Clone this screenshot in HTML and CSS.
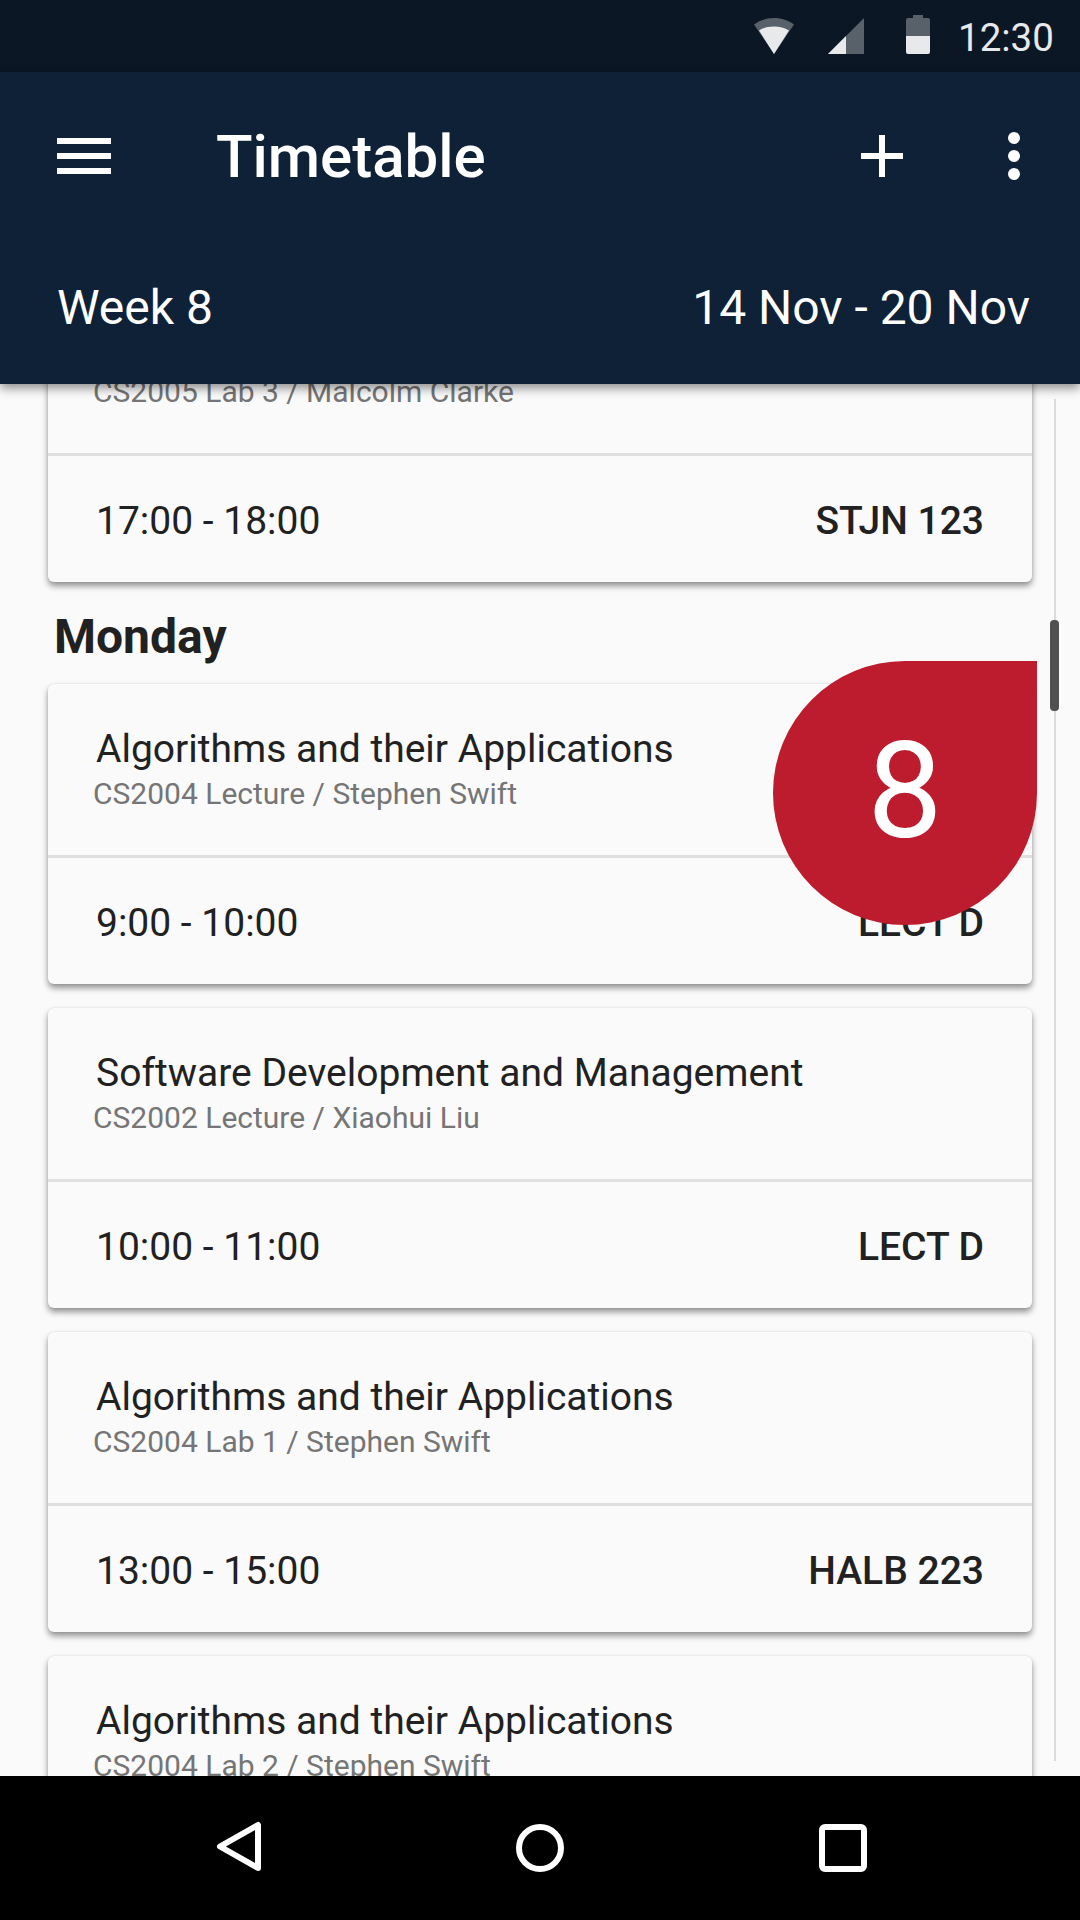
FILE: index.html
```html
<!DOCTYPE html>
<html>
<head>
	<meta charset="utf-8">
	<meta name="viewport" content="width=device-width, initial-scale=1">
	<title>Timetable</title>
	<link rel="stylesheet" href="styles.css">
</head>
<body>

<div class="screen">
	<div class="status-bar">
		<svg class="status-icon" width="40" height="36" viewBox="0 0 40 36">
			<path d="M0 6.5C5.5 2.4 12.4 0 20 0s14.500 2.400 20 6.500L20 36z" fill="#586069"/>
			<path d="M5 12.500C9.200 9.800 14.400 8.600 20 8.600s10.800 1.200 15 3.900L20 36z" fill="#e8e9eb"/>
		</svg>
		<svg class="status-icon signal" width="36" height="36" viewBox="0 0 36 36">
			<path d="M36 0v36H0z" fill="#586069"/>
			<path d="M18 18v18H0z" fill="#e8e9eb"/>
		</svg>
		<svg class="status-icon battery" width="24" height="39" viewBox="0 0 24 39">
			<path d="M7 0h10v3h5a2 2 0 0 1 2 2v16H0V5a2 2 0 0 1 2-2h5z" fill="#586069"/>
			<path d="M0 21h24v16a2 2 0 0 1-2 2H2a2 2 0 0 1-2-2z" fill="#e8e9eb"/>
		</svg>
		<span class="clock">12:30</span>
	</div>

	<div class="app-bar">
		<div class="toolbar">
			<div class="menu-icon"><span></span><span></span><span></span></div>
			<h1 class="title">Timetable</h1>
			<svg class="add-icon" width="42" height="42" viewBox="0 0 42 42">
				<path d="M18 0h6v18h18v6H24v18h-6V24H0v-6h18z" fill="#fff"/>
			</svg>
			<div class="more-icon"><span></span><span></span><span></span></div>
		</div>
		<div class="week-row">
			<span>Week 8</span>
			<span>14 Nov - 20 Nov</span>
		</div>
	</div>

	<div class="content">
		<div class="list">
			<div class="card">
				<div class="card-top">
					<div class="module">Algorithms and their Applications</div>
					<div class="detail">CS2005 Lab 3 / Malcolm Clarke</div>
				</div>
				<div class="card-bottom">
					<span class="time">17:00 - 18:00</span>
					<span class="room">STJN 123</span>
				</div>
			</div>

			<h2 class="day">Monday</h2>

			<div class="card">
				<div class="card-top">
					<div class="module">Algorithms and their Applications</div>
					<div class="detail">CS2004 Lecture / Stephen Swift</div>
				</div>
				<div class="card-bottom">
					<span class="time">9:00 - 10:00</span>
					<span class="room">LECT D</span>
				</div>
			</div>
			<div class="card">
				<div class="card-top">
					<div class="module">Software Development and Management</div>
					<div class="detail">CS2002 Lecture / Xiaohui Liu</div>
				</div>
				<div class="card-bottom">
					<span class="time">10:00 - 11:00</span>
					<span class="room">LECT D</span>
				</div>
			</div>
			<div class="card">
				<div class="card-top">
					<div class="module">Algorithms and their Applications</div>
					<div class="detail">CS2004 Lab 1 / Stephen Swift</div>
				</div>
				<div class="card-bottom">
					<span class="time">13:00 - 15:00</span>
					<span class="room">HALB 223</span>
				</div>
			</div>
			<div class="card">
				<div class="card-top">
					<div class="module">Algorithms and their Applications</div>
					<div class="detail">CS2004 Lab 2 / Stephen Swift</div>
				</div>
				<div class="card-bottom">
					<span class="time">15:00 - 17:00</span>
					<span class="room">HALB 223</span>
				</div>
			</div>
		</div>

		<div class="scroll-track"></div>
		<div class="scroll-thumb"></div>
		<div class="week-drop">8</div>
	</div>

	<div class="nav-bar">
		<svg width="45" height="51" viewBox="0 0 45 51">
			<path d="M42 4V47L4 25.500z" fill="none" stroke="#fff" stroke-width="6" stroke-linejoin="round"/>
		</svg>
		<svg class="nav-round" width="48" height="48" viewBox="0 0 48 48">
			<circle cx="24" cy="24" r="21" fill="none" stroke="#fff" stroke-width="6"/>
		</svg>
		<svg class="nav-round" width="48" height="48" viewBox="0 0 48 48">
			<rect x="3" y="3" width="42" height="42" rx="3" fill="none" stroke="#fff" stroke-width="6"/>
		</svg>
	</div>
</div>

</body>
</html>
```

FILE: styles.css
```css
* {
	box-sizing: border-box;
	margin: 0;
	padding: 0;
	font-family: Roboto, sans-serif;
}
body {
	background-color: #fafafa;
}
.screen {
	display: flex;
	flex-direction: column;
	width: 1080px;
	height: 1920px;
	overflow: hidden;
}
.status-bar {
	display: flex;
	align-items: flex-start;
	height: 72px;
	padding: 18px 0 0 754px;
	background-color: #0b1725;
	flex-shrink: 0;
}
.status-icon {
	display: block;
	flex-shrink: 0;
}
.signal {
	margin-left: 34px;
}
.battery {
	margin-left: 42px;
	margin-top: -3px;
}
.clock {
	margin-left: 28px;
	color: #e8e9eb;
	font-size: 38.500px;
	line-height: 40px;
}
.app-bar {
	position: relative;
	z-index: 2;
	height: 312px;
	background-color: #0f2137;
	box-shadow: 0 4px 10px rgba(0, 0, 0, 0.45);
	color: #fff;
	flex-shrink: 0;
}
.toolbar {
	display: flex;
	align-items: center;
	height: 168px;
	padding-left: 57px;
}
.menu-icon {
	display: flex;
	flex-direction: column;
	gap: 9px;
	width: 54px;
}
.menu-icon span {
	height: 6px;
	background-color: #fff;
}
.title {
	width: 645px;
	margin-left: 105px;
	font-size: 60px;
	font-weight: 500;
}
.more-icon {
	display: flex;
	flex-direction: column;
	gap: 6px;
	margin-left: 105px;
}
.more-icon span {
	width: 12px;
	height: 12px;
	border-radius: 50%;
	background-color: #fff;
}
.week-row {
	display: flex;
	justify-content: space-between;
	padding: 38px 50px 0 57px;
	font-size: 48px;
	line-height: 60px;
}
.content {
	position: relative;
	flex: 1;
	overflow: hidden;
}
.list {
	display: flex;
	flex-direction: column;
	gap: 24px;
	margin-top: -102px;
	padding: 0 48px;
}
.card {
	height: 300px;
	background-color: #fafafa;
	border-radius: 6px;
	box-shadow: 0 4px 6px rgba(0, 0, 0, 0.42), 0 0 2px rgba(0, 0, 0, 0.1);
	flex-shrink: 0;
}
.card-top {
	height: 174px;
	padding: 37px 48px 0;
	border-bottom: 3px solid #dfdfdf;
}
.module {
	font-size: 39px;
	line-height: 56px;
	color: #212121;
}
.detail {
	margin-top: -1px;
	margin-left: -3px;
	font-size: 30px;
	line-height: 36px;
	color: #757575;
}
.card-bottom {
	display: flex;
	justify-content: space-between;
	align-items: center;
	height: 126px;
	padding: 3px 48px 0;
	color: #212121;
}
.time {
	font-size: 39px;
}
.room {
	font-size: 39px;
	font-weight: 500;
}
.day {
	margin: 4px 0 -4px 6px;
	font-size: 48px;
	font-weight: 700;
	line-height: 54px;
	color: #212121;
}
.scroll-track {
	position: absolute;
	left: 1054px;
	top: 15px;
	width: 2px;
	height: 1362px;
	background-color: #dcdcdc;
}
.scroll-thumb {
	position: absolute;
	left: 1050px;
	top: 236px;
	width: 9px;
	height: 91px;
	border-radius: 4px;
	background-color: #505050;
}
.week-drop {
	position: absolute;
	left: 773px;
	top: 277px;
	display: flex;
	align-items: center;
	justify-content: center;
	width: 264px;
	height: 264px;
	padding-bottom: 3px;
	border-radius: 50% 0 50% 50%;
	background-color: #bc1c2e;
	color: #fff;
	font-size: 134px;
}
.nav-bar {
	position: relative;
	z-index: 2;
	display: flex;
	align-items: flex-start;
	gap: 255px;
	height: 144px;
	padding: 45px 0 0 216px;
	background-color: #000;
	flex-shrink: 0;
}
.nav-round {
	margin-top: 3px;
}
```
